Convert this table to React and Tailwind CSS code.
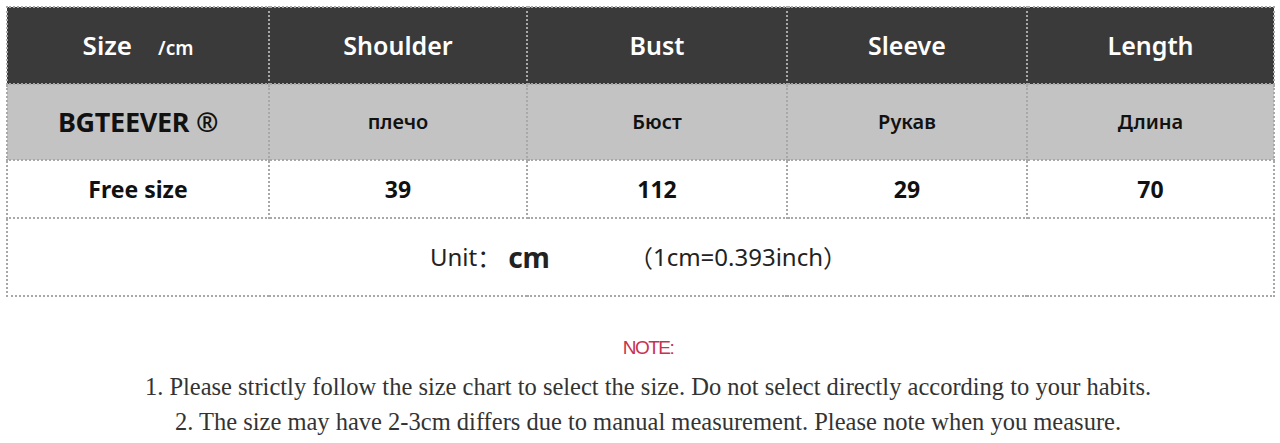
import React from "react";

const headers = ["Shoulder", "Bust", "Sleeve", "Length"];
const ru = ["плечо", "Бюст", "Рукав", "Длина"];
const values = ["39", "112", "29", "70"];
const widths = ["w-[262px]", "w-[258px]", "w-[260px]", "w-[240px]", "w-[247px]"];

export default function App() {
  const cell = "border-2 border-dotted border-[#a8a8a8] text-center align-middle";
  const cjk = "font-['Noto_Sans_CJK_SC',sans-serif]";

  return (
    <div className="w-[1280px] h-[443px] bg-white overflow-hidden font-['Noto_Sans',sans-serif]">
      <div className="pt-[6px] pl-[6px]">
        <table className="border-collapse table-fixed w-[1267px]">
          <colgroup>
            {widths.map((w, i) => (
              <col key={i} className={w} />
            ))}
          </colgroup>
          <tbody>
            {/* header */}
            <tr className="h-[77px] bg-[#3a3a3a] text-white">
              <td className={cell}>
                <span className="text-[26px] font-semibold">Size</span>
                <span className="text-[19px] font-semibold ml-[26px]">/cm</span>
              </td>
              {headers.map((h) => (
                <td key={h} className={`${cell} text-[25px] font-semibold`}>
                  {h}
                </td>
              ))}
            </tr>

            {/* russian labels */}
            <tr className="h-[76px] bg-[#c3c3c3] text-[#111]">
              <td className={`${cell} text-[27px] font-bold tracking-[-0.3px]`}>BGTEEVER ®</td>
              {ru.map((r) => (
                <td key={r} className={`${cell} text-[20px] font-semibold`}>
                  {r}
                </td>
              ))}
            </tr>

            {/* values */}
            <tr className="h-[58px] text-[#111]">
              <td className={`${cell} text-[23px] font-bold`}>Free size</td>
              {values.map((v) => (
                <td key={v} className={`${cell} text-[23px] font-bold`}>
                  {v}
                </td>
              ))}
            </tr>

            {/* unit */}
            <tr className="h-[78px] text-[#222]">
              <td colSpan={5} className={cell}>
                <div className="flex items-center justify-center text-[24px] pr-[4px]">
                  <span>Unit</span>
                  <span className={cjk}>：</span>
                  <span className="text-[28px] font-bold ml-[7px]">cm</span>
                  <span className={`${cjk} ml-[79px]`}>（</span>
                  <span>1cm=0.393inch</span>
                  <span className={cjk}>）</span>
                </div>
              </td>
            </tr>
          </tbody>
        </table>
      </div>

      {/* notes */}
      <div className="mt-[40px] pl-[16px] flex flex-col items-center font-['Liberation_Serif',serif] text-[#333]">
        <div className="text-[19px] text-[#c8324f] font-['Liberation_Sans',sans-serif] tracking-[-1.5px] leading-[22px]">
          NOTE:
        </div>
        <p className="mt-[15px] text-[24.5px] leading-[26px]">
          1. Please strictly follow the size chart to select the size. Do not select directly according to your habits.
        </p>
        <p className="mt-[9px] text-[24.5px] leading-[26px]">
          2. The size may have 2-3cm differs due to manual measurement. Please note when you measure.
        </p>
      </div>
    </div>
  );
}
